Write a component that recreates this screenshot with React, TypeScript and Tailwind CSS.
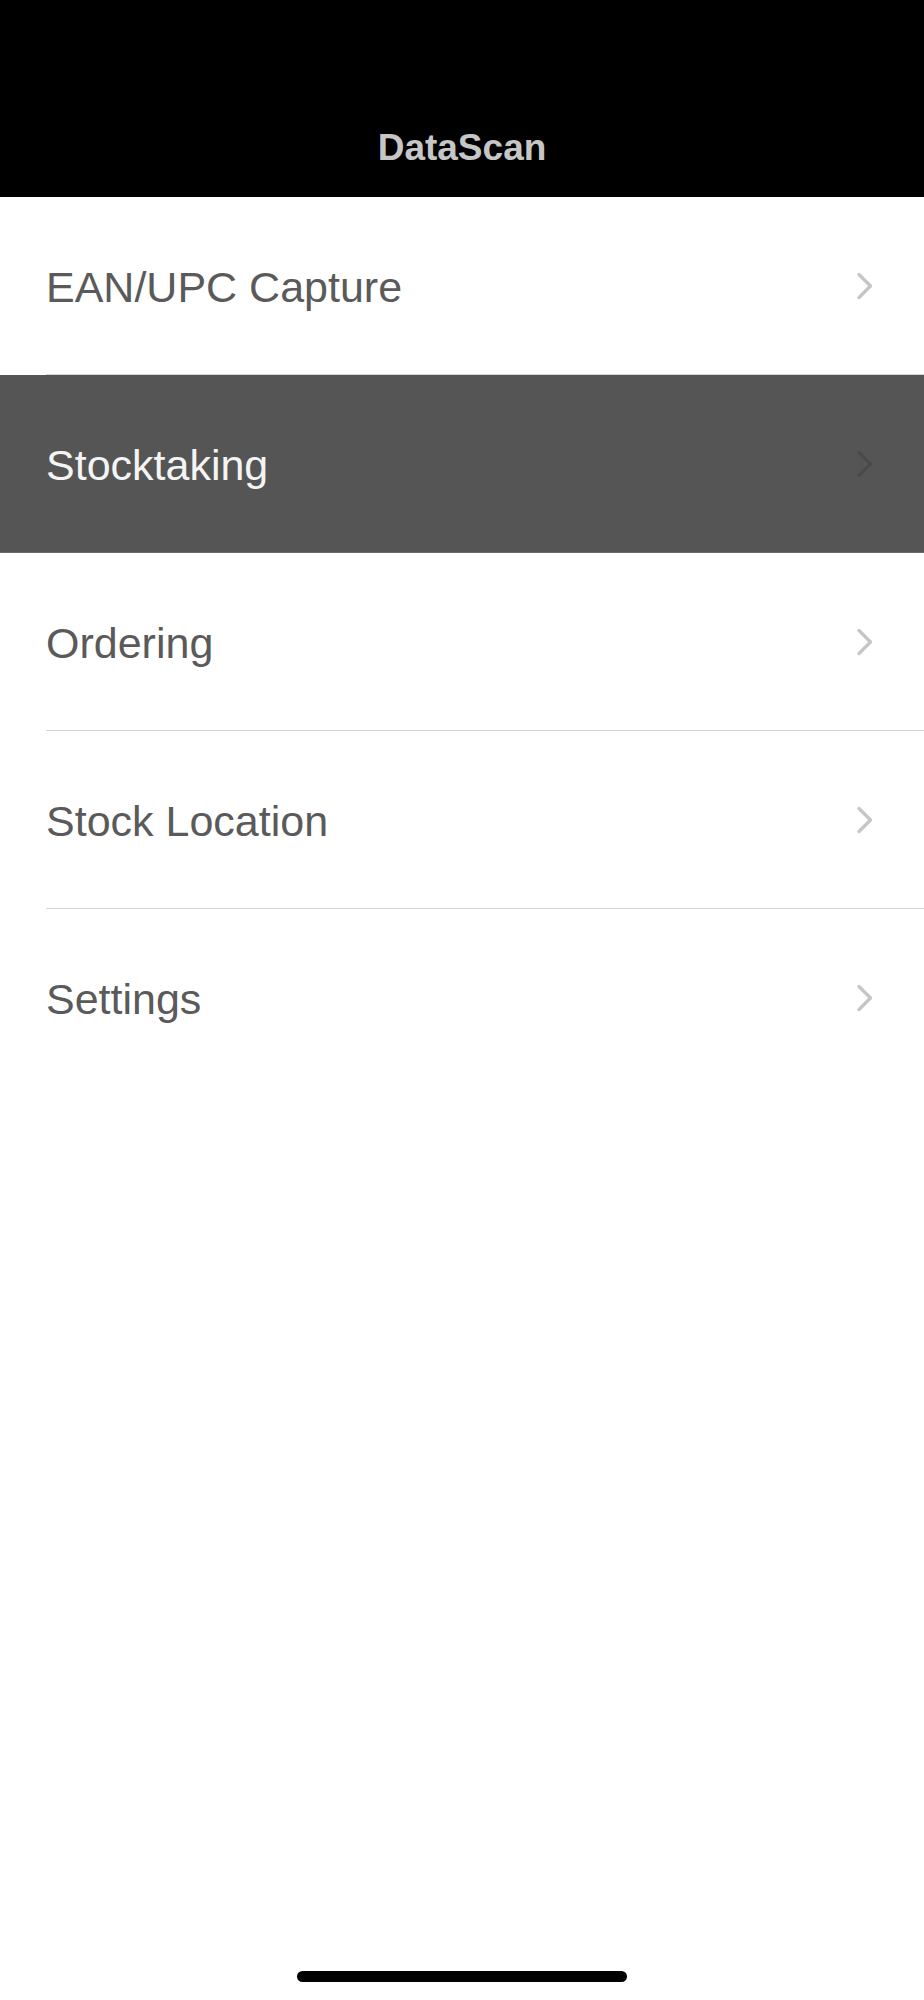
import React from "react";

const items = [
  { label: "EAN/UPC Capture", selected: false },
  { label: "Stocktaking", selected: true },
  { label: "Ordering", selected: false },
  { label: "Stock Location", selected: false },
  { label: "Settings", selected: false, last: true },
];

function Chevron({ dark }: { dark: boolean }) {
  return (
    <svg width="18" height="28" viewBox="0 0 18 28" fill="none">
      <path
        d="M3 2.5 L14.5 14 L3 25.5"
        stroke={dark ? "#4a4a4a" : "#c6c6c8"}
        strokeWidth="3.4"
        strokeLinecap="round"
        strokeLinejoin="round"
      />
    </svg>
  );
}

export default function App() {
  return (
    <div className="min-h-[2000px] w-full bg-white flex flex-col font-['Liberation_Sans',Arial,sans-serif]">

      {/* Nav bar */}

      <header className="h-[197px] bg-black flex justify-center pt-[129px]">
        <h1 className="text-[37px] leading-[37px] font-bold text-[#c6c6c6]">
          DataScan
        </h1>
      </header>

      {/* Menu list */}

      <ul>
        {items.map((item) => (
          <li
            key={item.label}
            className={`h-[178px] flex flex-col ${item.selected ? "bg-[#555555]" : "bg-white"}`}
          >
            <div className="flex-1 flex items-center justify-between pl-[46px] pr-[50px]">
              <span
                className={`text-[43px] leading-[43px] mt-[3px] ${item.selected ? "text-[#f4f4f4]" : "text-[#5a5a5a]"}`}
              >
                {item.label}
              </span>
              <Chevron dark={item.selected} />
            </div>
            {item.selected ? (
              <div className="h-px bg-[#6a6a6a]" />
            ) : item.last ? (
              <div className="h-px" />
            ) : (
              <div className="ml-[46px] h-px bg-[#d4d4d4]" />
            )}
          </li>
        ))}
      </ul>

      <div className="flex-1" />

      {/* Home indicator */}

      <div className="flex justify-center pb-[18px]">
        <div className="w-[330px] h-[11px] rounded-full bg-black" />
      </div>
    </div>
  );
}
